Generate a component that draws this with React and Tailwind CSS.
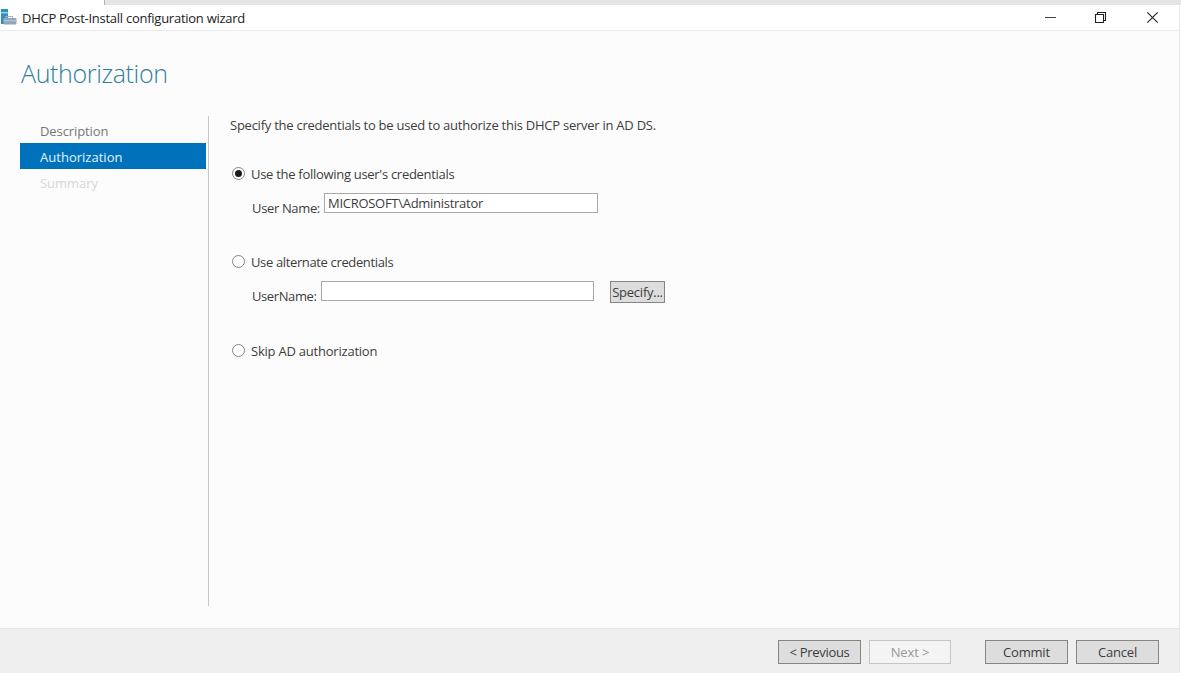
import React, { useState } from "react";

const ServerIcon = () => (
  <svg width="17" height="17" viewBox="0 0 17 17" className="shrink-0">
    <rect x="1" y="0" width="7" height="15" fill="#2f8fc4" />
    <rect x="1" y="3" width="7" height="1.4" fill="#9fd0ea" />
    <path d="M6 9V7.5h6.5V9" fill="none" stroke="#a5b4c1" strokeWidth="1.1" />
    <rect x="3.5" y="9" width="13" height="6.5" rx="0.8" fill="#8fa6ba" />
    <rect x="3.5" y="11.2" width="13" height="1" fill="#b9cad9" />
  </svg>
);

const WindowControls = () => (
  <div className="flex items-center pr-[20px]">
    <svg width="13" height="13" viewBox="0 0 13 13" className="mr-[37px]">
      <path d="M1 6.5h11" stroke="#444" strokeWidth="1" />
    </svg>
    <svg width="14" height="14" viewBox="0 0 14 14" className="mr-[38px]">
      <path d="M1.5 3.5h8v8h-8z" fill="none" stroke="#222" strokeWidth="1.1" />
      <path d="M3.5 3.5v-2h8v8h-2" fill="none" stroke="#222" strokeWidth="1.1" />
    </svg>
    <svg width="13" height="13" viewBox="0 0 13 13">
      <path d="M1.3 1.3l10.4 10.4M11.7 1.3L1.3 11.7" stroke="#222" strokeWidth="1.1" />
    </svg>
  </div>
);

const Radio = ({ label, tracking, checked, onSelect }) => (
  <button onClick={onSelect} className="flex h-5 items-center text-left">
    <span className="mb-[1px] ml-[2px] mr-[6px] flex size-[13px] shrink-0 items-center justify-center rounded-full border border-[#858585] bg-white">
      {checked && <span className="size-[7px] rounded-full bg-[#1c1c1c]" />}
    </span>
    <span className={tracking}>{label}</span>
  </button>
);

const steps = [
  { name: "Description", style: "text-[#777777] tracking-[-0.1px]" },
  { name: "Authorization", style: "bg-[#0072bc] text-[#e4f2fb] tracking-[0.02px]" },
  { name: "Summary", style: "text-[#d6d6d6] tracking-[-0.05px]" },
];

const App = () => {
  const [choice, setChoice] = useState("current");
  const [userName, setUserName] = useState("MICROSOFT\\Administrator");
  const [altName, setAltName] = useState("");

  return (
    <div className="flex h-[673px] w-[1181px] flex-col bg-white font-['Open_Sans',sans-serif] text-[13px] leading-5 text-[#3c3c3c]">
      {/* Window behind */}
      <div className="flex h-[5px] shrink-0">
        <div className="w-[105px] border-r border-[#b5b5b5] bg-white" />
        <div className="flex-1 bg-[#e4e4e4]" />
      </div>

      <div className="flex min-h-0 w-[1180px] flex-1 flex-col border-r border-[#e6e6e6]">
        {/* Title bar */}
        <div className="flex h-[26px] shrink-0 items-center justify-between border-b border-[#ebebeb]">
          <div className="flex items-center gap-[5px]">
            <ServerIcon />
            <span className="tracking-[-0.26px] text-[#222222]">
              DHCP Post-Install configuration wizard
            </span>
          </div>
          <WindowControls />
        </div>

        <div className="flex flex-1 flex-col bg-[#fcfcfc]">
          <h1 className="mt-[24px] h-9 pl-[21px] text-[25px] font-light leading-9 tracking-[-0.35px] text-[#2f7f9c]">
            Authorization
          </h1>

          <div className="mt-[25px] flex h-[490px]">
            {/* Steps */}
            <div className="ml-5 w-[189px] border-r border-[#c8c8c8] pr-[2px] pt-[1px]">
              {steps.map((step) => (
                <div
                  key={step.name}
                  className={`flex h-[26px] items-center pl-5 pt-[2px] ${step.style}`}
                >
                  {step.name}
                </div>
              ))}
            </div>

            {/* Credentials */}
            <div className="ml-[21px]">
              <p className="-mt-[1px] tracking-[-0.25px]">
                Specify the credentials to be used to authorize this DHCP server in AD DS.
              </p>

              <div className="mt-[29px]">
                <Radio
                  label="Use the following user's credentials"
                  tracking="tracking-[-0.29px]"
                  checked={choice === "current"}
                  onSelect={() => setChoice("current")}
                />
                <div className="mt-[9px] flex items-start pl-[22px]">
                  <label className="mt-[5px] w-[72px] whitespace-nowrap tracking-[-0.35px]">
                    User Name:
                  </label>
                  <input
                    className="h-[20px] w-[274px] border border-[#a9a9a9] bg-white px-[3px] tracking-[-0.28px] outline-none"
                    value={userName}
                    onChange={(e) => setUserName(e.target.value)}
                  />
                </div>
              </div>

              <div className="mt-[34px]">
                <Radio
                  label="Use alternate credentials"
                  tracking="tracking-[-0.36px]"
                  checked={choice === "alternate"}
                  onSelect={() => setChoice("alternate")}
                />
                <div className="mt-[9px] flex items-start pl-[22px]">
                  <label className="mt-[5px] w-[69px] whitespace-nowrap tracking-[-0.4px]">
                    UserName:
                  </label>
                  <input
                    className="h-[20px] w-[273px] border border-[#a9a9a9] bg-white px-[3px] outline-none"
                    value={altName}
                    onChange={(e) => setAltName(e.target.value)}
                  />
                  <button className="ml-[16px] h-[22px] w-[55px] border border-[#858585] bg-[#dddddd] leading-5 tracking-[-0.25px]">
                    Specify...
                  </button>
                </div>
              </div>

              <div className="mt-[35px]">
                <Radio
                  label="Skip AD authorization"
                  tracking="tracking-[-0.22px]"
                  checked={choice === "skip"}
                  onSelect={() => setChoice("skip")}
                />
              </div>
            </div>
          </div>
        </div>

        {/* Footer */}
        <div className="flex h-[45px] shrink-0 justify-end border-t border-[#e6e6e6] bg-[#efefef] pr-5 pt-[11px]">
          <button className="mr-2 h-[24px] w-[83px] border border-[#858585] bg-[#dddddd] tracking-[-0.3px]">
            &lt; Previous
          </button>
          <button className="mr-[34px] h-[24px] w-[82px] border border-[#c6c6c6] bg-[#f4f4f4] tracking-[-0.1px] text-[#989898]">
            Next &gt;
          </button>
          <button className="mr-2 h-[24px] w-[83px] border border-[#858585] bg-[#dddddd] tracking-[-0.2px]">
            Commit
          </button>
          <button className="h-[24px] w-[83px] border border-[#858585] bg-[#dddddd] tracking-[-0.2px]">
            Cancel
          </button>
        </div>
      </div>
    </div>
  );
};

export default App;
